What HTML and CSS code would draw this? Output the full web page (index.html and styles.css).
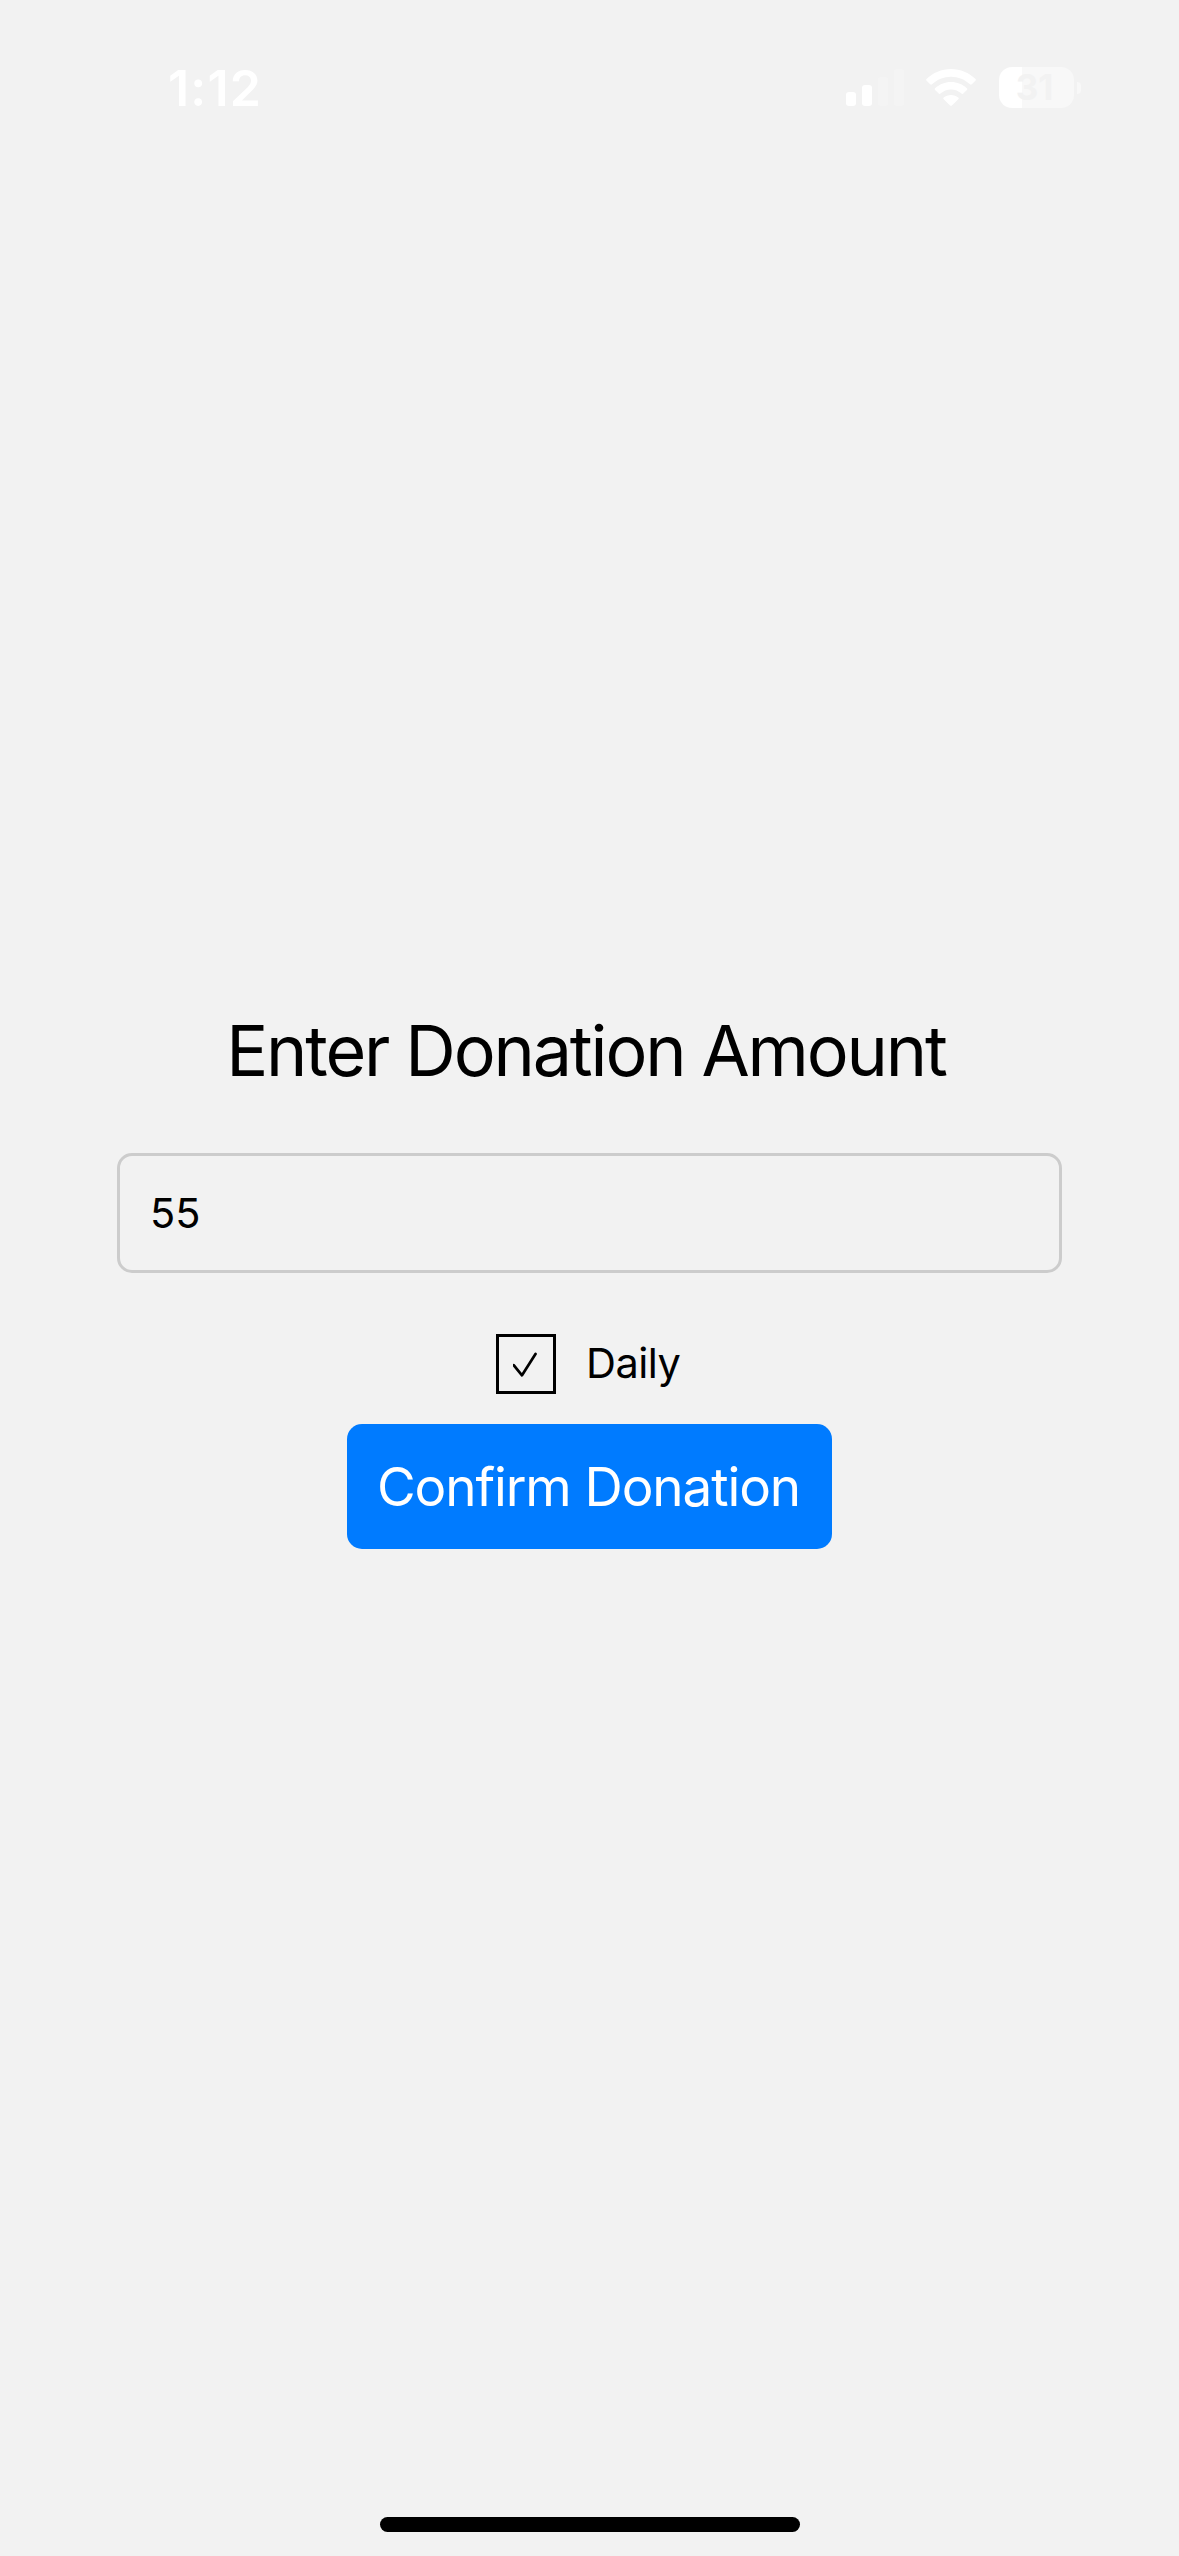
FILE: index.html
```html
<!DOCTYPE html>
<html lang="en">
<head>
<meta charset="utf-8">
<title>Donation</title>
<link rel="stylesheet" href="styles.css">
</head>
<body>
<header class="status-bar">
  <span class="time">1:12</span>
  <div class="indicators">
    <svg class="signal" width="58" height="37" viewBox="0 0 58 37" fill="#fff">
      <rect x="0" y="23" width="10" height="14" rx="3"/>
      <rect x="16" y="16" width="10" height="21" rx="3"/>
      <rect x="32" y="8" width="10" height="29" rx="3" fill="#f4f4f4"/>
      <rect x="48" y="0" width="10" height="37" rx="3" fill="#f4f4f4"/>
    </svg>
    <svg class="wifi" width="50" height="37" viewBox="0 0 50 37" fill="#fff">
      <path d="M25 0C34.500 0 43 3.800 49.300 9.800Q50.300 10.800 49.400 11.800L45.800 15.300Q44.900 16.200 44 15.300C39 10.500 32.200 7.700 25 7.700S11 10.500 6 15.300Q5.100 16.200 4.200 15.300L.6 11.800Q-.3 10.800.7 9.800C7 3.800 15.500 0 25 0Z"/>
      <path d="M25 13C31.200 13 36.700 15.400 40.900 19.200Q41.900 20.100 40.900 21.100L37.300 24.600Q36.400 25.400 35.500 24.600C32.700 22.100 29 20.500 25 20.500S17.300 22.100 14.500 24.600Q13.600 25.400 12.700 24.600L9.100 21.100Q8.100 20.100 9.100 19.200C13.300 15.400 18.800 13 25 13Z"/>
      <path d="M25 26C27.800 26 30.300 26.900 32.300 28.500Q33.200 29.300 32.300 30.200L25.900 36.400Q25 37.300 24.100 36.400L17.700 30.200Q16.800 29.300 17.700 28.500C19.700 26.900 22.200 26 25 26Z"/>
    </svg>
    <div class="battery">
      <div class="battery-body"><span class="battery-level">31</span></div>
      <div class="battery-tip"></div>
    </div>
  </div>
</header>
<main class="form">
  <h1 class="title">Enter Donation Amount</h1>
  <div class="amount">55</div>
  <div class="frequency">
    <div class="checkbox">
      <svg width="26" height="26" viewBox="0 0 26 26" fill="none" stroke="#000" stroke-width="2.700" stroke-linecap="round" stroke-linejoin="round">
        <path d="M.7 14.200L9 24.300L22.500 3"/>
      </svg>
    </div>
    <span class="frequency-label">Daily</span>
  </div>
  <button class="confirm">Confirm Donation</button>
</main>
<div class="home-indicator"></div>
</body>
</html>
```
FILE: styles.css
```css
* {
  box-sizing: border-box;
}

body {
  margin: 0;
  width: 1179px;
  height: 2556px;
  display: flex;
  flex-direction: column;
  align-items: center;
  background: #f2f2f2;
  color: #000;
  font-family: Inter, "Liberation Sans", sans-serif;
  overflow: hidden;
}

.status-bar {
  width: 100%;
  height: 177px;
  padding: 57px 98px 0 168px;
  display: flex;
  justify-content: space-between;
  align-items: flex-start;
  color: #fff;
}

.time {
  font-size: 50px;
  font-weight: 600;
  line-height: 62px;
  letter-spacing: 1.2px;
  white-space: nowrap;
}

.indicators {
  display: flex;
  padding-top: 10px;
}

.signal {
  margin-top: 2px;
}

.wifi {
  margin: 2px 23px 0 22px;
}

.battery {
  display: flex;
  align-items: center;
  gap: 3px;
}

.battery-body {
  width: 75px;
  height: 41px;
  padding-right: 4px;
  border-radius: 13px;
  background: linear-gradient(to right, #fff 23px, #f8f8f8 23px);
  display: flex;
  justify-content: center;
}

.battery-level {
  color: #f2f2f2;
  font-size: 35px;
  font-weight: 700;
  line-height: 41px;
}

.battery-tip {
  width: 4px;
  height: 12px;
  border-radius: 0 4px 4px 0;
  background: #f8f8f8;
}

.form {
  flex: 1;
  width: 945px;
  padding-top: 831px;
  display: flex;
  flex-direction: column;
  align-items: center;
}

.title {
  margin: 0 0 59px;
  padding-right: 7px;
  font-size: 70px;
  font-weight: 400;
  line-height: 86px;
  letter-spacing: -2.15px;
  word-spacing: -0.5px;
  white-space: nowrap;
}

.amount {
  width: 100%;
  height: 120px;
  padding: 0 30px;
  border: 3px solid #ccc;
  border-radius: 15px;
  font-size: 41.5px;
  line-height: 114px;
}

.frequency {
  width: 187px;
  margin: 61px 0 30px;
  display: flex;
  gap: 30px;
}

.checkbox {
  width: 60px;
  height: 60px;
  border: 3px solid #000;
  display: flex;
  align-items: center;
  justify-content: center;
}

.frequency-label {
  font-size: 41.5px;
  line-height: 58px;
  letter-spacing: -0.5px;
}

.confirm {
  width: 485px;
  height: 125px;
  padding: 1px 2px 0 0;
  border: 0;
  border-radius: 15px;
  background: #007bff;
  color: #fff;
  font: 400 53px/124px Inter, "Liberation Sans", sans-serif;
  letter-spacing: -1.1px;
  word-spacing: 0;
  white-space: nowrap;
}

.home-indicator {
  width: 420px;
  height: 15px;
  margin-bottom: 24px;
  border-radius: 8px;
  background: #000;
}
```
